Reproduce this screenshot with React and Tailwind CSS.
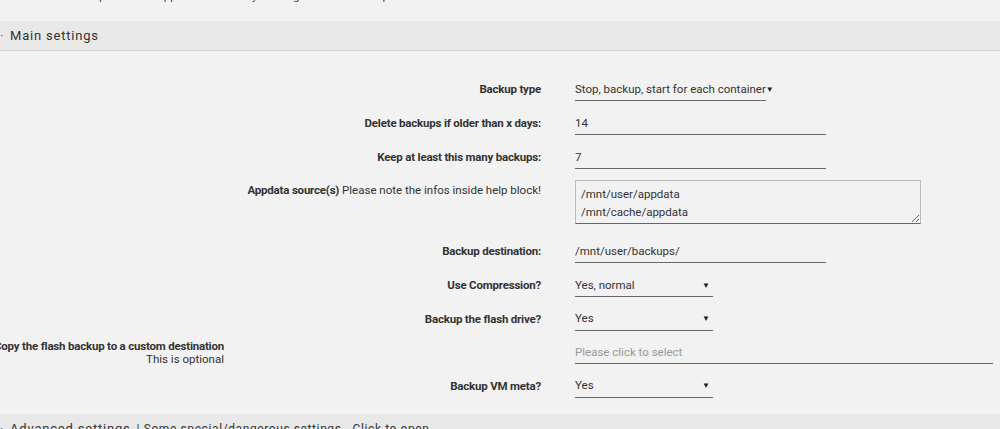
const font = { fontFamily: "Roboto, Lato, 'Liberation Sans', sans-serif" };

function Row({ label, h = "h-[34px]", children }) {
  return (
    <div className={`flex items-center ${h}`}>
      <div className="w-[541px] shrink-0 text-right text-[11.5px] tracking-[-0.2px] font-bold text-[#333]">{label}</div>
      <div className="ml-[34px]">{children}</div>
    </div>
  );
}

function TextInput({ value, w = "w-[251px]", placeholder }) {
  return (
    <div className={`${w} h-[22px] flex items-center border-b border-[#666] text-[11.5px] ${placeholder ? "text-[#999]" : "text-[#333]"}`}>
      {value || placeholder}
    </div>
  );
}

function Select({ value, w = "w-[138px]", tight }) {
  return (
    <div className={`${w} h-[22px] flex items-center ${tight ? "" : "justify-between pr-[3px]"} border-b border-[#666] text-[11.5px] text-[#333] whitespace-nowrap`}>
      <span>{value}</span>
      <span className="text-[8px] leading-none text-[#222]">▼</span>
    </div>
  );
}

function SectionHeader({ title, extra }) {
  return (
    <div className="h-[30px] bg-[#e8e8e8] border-b border-[#d5d5d5] flex items-center text-[13px] tracking-[0.8px] text-[#333] whitespace-nowrap">
      <span className="w-[10px] text-[#666]">·</span>
      <span>{title}</span>
      {extra && <span className="ml-[6px] text-[12px] tracking-[0.6px]">{extra}</span>}
    </div>
  );
}

export default function App() {
  return (
    <div className="w-[1000px] h-[429px] overflow-hidden bg-[#f2f2f2] text-[#333]" style={font}>
      <div className="mt-[-12px] h-[16px] text-[11.5px] leading-[16px] whitespace-nowrap text-[#444]">
        se also read the help block for Appdata sources by clicking the title of the option.
      </div>
      <div className="mt-[17px]">
        <SectionHeader title="Main settings" />
      </div>

      <div className="mt-[22px]">
        <Row label="Backup type">
          <Select value="Stop, backup, start for each container" w="w-[191px]" tight />
        </Row>
        <Row label="Delete backups if older than x days:">
          <TextInput value="14" />
        </Row>
        <Row label="Keep at least this many backups:">
          <TextInput value="7" />
        </Row>

        <div className="flex items-start h-[60px]">
          <div className="w-[541px] shrink-0 text-right text-[11.5px] text-[#333] pt-[7px]">
            <span className="font-bold tracking-[-0.2px]">Appdata source(s)</span>{" "}
            <span>Please note the infos inside help block!</span>
          </div>
          <textarea
            className="ml-[34px] mt-[5px] w-[346px] h-[44px] px-[5px] py-[4px] text-[11.5px] leading-[18px] text-[#333] bg-[#f2f2f2] border border-[#bbb] border-b-[#666] outline-none"
            style={font}
            defaultValue={"/mnt/user/appdata\n/mnt/cache/appdata"}
          />
        </div>

        <Row label="Backup destination:">
          <TextInput value="/mnt/user/backups/" />
        </Row>
        <Row label="Use Compression?">
          <Select value="Yes, normal" />
        </Row>
        <Row label="Backup the flash drive?" h="h-[33px]">
          <Select value="Yes" />
        </Row>

        <div className="flex items-center h-[34px]">
          <div className="w-[224px] shrink-0 flex justify-end whitespace-nowrap">
            <div className="text-right text-[11.5px] leading-[13px] text-[#333]">
              <div className="font-bold tracking-[-0.2px]">Copy the flash backup to a custom destination</div>
              <div>This is optional</div>
            </div>
          </div>
          <div className="ml-[351px]">
            <TextInput placeholder="Please click to select" w="w-[418px]" />
          </div>
        </div>

        <Row label="Backup VM meta?" h="h-[33px]">
          <Select value="Yes" />
        </Row>
      </div>

      <div className="mt-[11px]">
        <SectionHeader title="Advanced settings" extra="| Some special/dangerous settings - Click to open" />
      </div>
    </div>
  );
}
